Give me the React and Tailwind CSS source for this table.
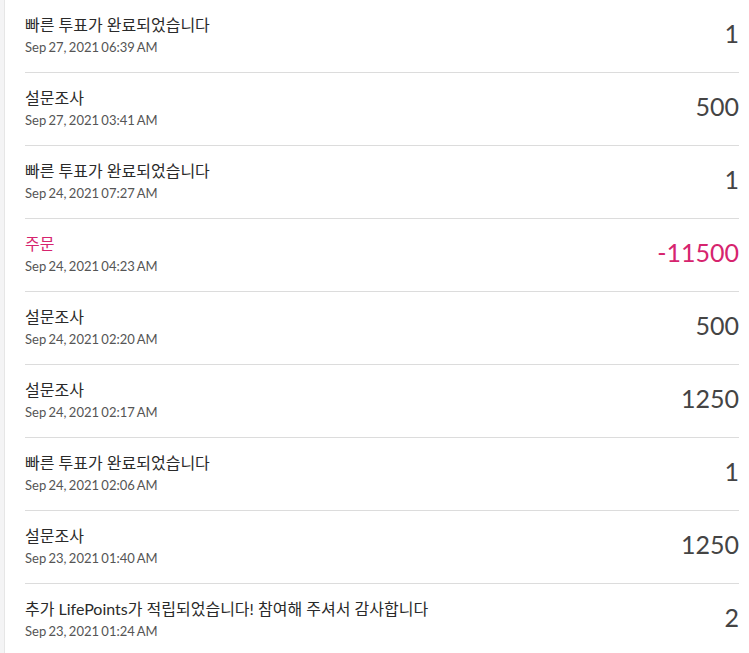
const ROWS = [
  { title: '빠른 투표가 완료되었습니다', date: 'Sep 27, 2021 06:39 AM', points: '1' },
  { title: '설문조사', date: 'Sep 27, 2021 03:41 AM', points: '500' },
  { title: '빠른 투표가 완료되었습니다', date: 'Sep 24, 2021 07:27 AM', points: '1' },
  { title: '주문', date: 'Sep 24, 2021 04:23 AM', points: '-11500', negative: true },
  { title: '설문조사', date: 'Sep 24, 2021 02:20 AM', points: '500' },
  { title: '설문조사', date: 'Sep 24, 2021 02:17 AM', points: '1250' },
  { title: '빠른 투표가 완료되었습니다', date: 'Sep 24, 2021 02:06 AM', points: '1' },
  { title: '설문조사', date: 'Sep 23, 2021 01:40 AM', points: '1250' },
  { title: '추가 LifePoints가 적립되었습니다! 참여해 주셔서 감사합니다', date: 'Sep 23, 2021 01:24 AM', points: '2' },
]

function Row({ title, date, points, negative, last }) {
  return (
    <li
      className={
        'flex items-start justify-between h-[73px] ' +
        (last ? '' : 'border-b border-[#dcdcdc]')
      }
    >
      <div className="pt-[15px]">
        <div
          className={
            'text-[16px] leading-[20px] font-normal ' + (negative ? 'text-[#d6246e]' : 'text-[#2a2a2a]')
          }
        >
          {title}
        </div>
        <div className="mt-[4px] text-[13px] leading-[17px] text-[#555] [word-spacing:-1px]">{date}</div>
      </div>
      <div
        className={
          'pt-[18px] text-[25px] leading-[30px] ' + (negative ? 'text-[#d6246e]' : 'text-[#444]')
        }
      >
        {points}
      </div>
    </li>
  )
}

export default function App() {
  return (
    <div
      className="flex h-[653px] w-[749px] overflow-hidden bg-white"
      style={{ fontFamily: 'Lato, "Noto Sans CJK KR", sans-serif' }}
    >
      <div className="w-[5px] shrink-0 bg-[#f4f4f5] border-r border-[#e6e6e6]" />
      <ul className="flex-1 pl-[20px] pr-[10px]">
        {ROWS.map((r, i) => (
          <Row key={i} {...r} last={i === ROWS.length - 1} />
        ))}
      </ul>
    </div>
  )
}
